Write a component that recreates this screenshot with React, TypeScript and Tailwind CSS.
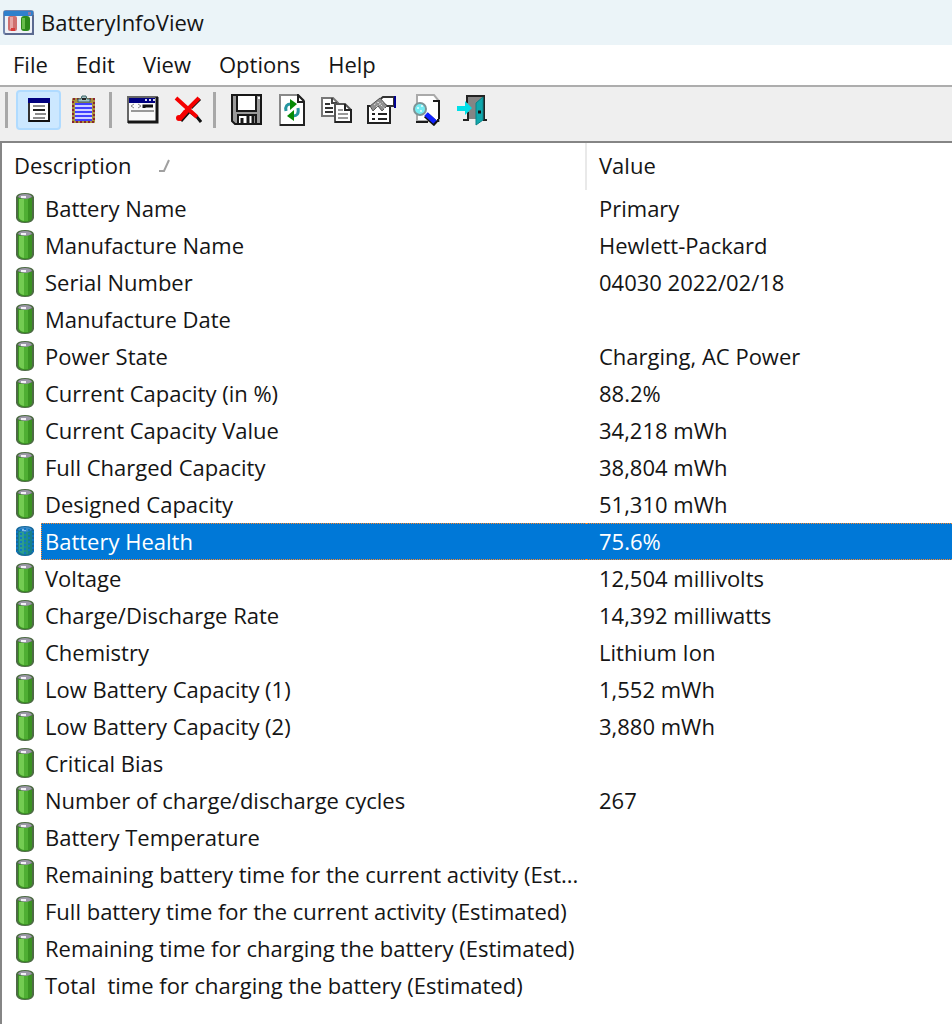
import React, { useState } from 'react';

const icon = 'block shrink-0';

const AppIcon = () => (
  <svg className={icon} width="32" height="26" viewBox="0 0 32 26">
    <rect x="1" y="1" width="29" height="23" rx="2" fill="#eef1f7" stroke="#7386ad" strokeWidth="2" />
    <path d="M1 1h29v5H1z" fill="#2f80cc" />
    <path d="M25 2h3v3h-3z" fill="#8a78a4" />
    <path d="M2 24h28V5" fill="none" stroke="#5c6a90" strokeWidth="2" />
    <rect x="5" y="6" width="9" height="15" rx="2" fill="#cf7070" />
    <rect x="7" y="7" width="3" height="12" fill="#e6a5a5" />
    <path d="M8 18h4v3H8z" fill="#d83a3a" />
    <rect x="18" y="6" width="9" height="15" rx="3" fill="#2c8a1b" />
    <rect x="19" y="8" width="3" height="11" fill="#68bd4c" />
  </svg>
);

const DetailsIcon = () => (
  <svg className={icon} width="24" height="26" viewBox="0 0 24 26">
    <rect x="2" y="2" width="20" height="22" fill="#fff" stroke="#333" strokeWidth="2" />
    <path d="M1 1h22v5H1z" fill="#000080" />
    <path d="M2 24h20V6" fill="none" stroke="#111" strokeWidth="2" />
    <path d="M6 9h12M8 17h11M6 21h12" stroke="#8c8c8c" strokeWidth="2" />
    <path d="M6 13h12" stroke="#222" strokeWidth="2" />
  </svg>
);

const ClipboardIcon = () => (
  <svg className={icon} width="26" height="30" viewBox="0 0 26 30">
    <rect x="1" y="3" width="23" height="25" rx="1" fill="#a8923c" />
    <rect x="2" y="4" width="21" height="23" fill="none" stroke="#8a2530" strokeWidth="2" strokeDasharray="2 2" />
    <rect x="4" y="8" width="17" height="17" fill="#d0d4ff" />
    <path d="M4 9h17M4 13h17M4 17h17M4 21h17M4 25h17" stroke="#4040ff" strokeWidth="2" />
    <path d="M7 7V4h3l1-3h4l1 3h3v3z" fill="#a4c4c4" stroke="#3d6568" />
    <path d="M11 4h4" stroke="#222" strokeWidth="2" />
  </svg>
);

const WindowIcon = () => (
  <svg className={icon} width="32" height="28" viewBox="0 0 32 28">
    <rect x="1" y="1" width="29" height="25" fill="#fafafa" stroke="#666" strokeWidth="2" />
    <path d="M1 26h29V1" fill="none" stroke="#161616" strokeWidth="3" />
    <path d="M2 2h26v5H2z" fill="#000080" />
    <path d="M18 4h2M22 4h2M26 4h2" stroke="#d8d8f0" strokeWidth="2" />
    <path d="M7 8l-3 2 3 2M11 8l3 2-3 2" fill="none" stroke="#888" strokeWidth="1" />
    <path d="M17 12v-2h9" fill="none" stroke="#111" strokeWidth="3" />
    <path d="M4 15h23" stroke="#999" strokeWidth="2" />
  </svg>
);

const DeleteIcon = () => (
  <svg className={icon} width="28" height="28" viewBox="0 0 28 28">
    <path d="M7 25l8-9M17 12L26 3M15 15l8 6 4 5" fill="none" stroke="#111" strokeWidth="3" />
    <path d="M2 2l11 10 10 9" fill="none" stroke="#f50000" strokeWidth="4" />
    <path d="M25 2L14 13 5 23" fill="none" stroke="#f50000" strokeWidth="4" />
    <path d="M10 14l5 2-8 9-4-2z" fill="#f50000" />
    <circle cx="5" cy="22" r="3" fill="#f50000" />
  </svg>
);

const SaveIcon = () => (
  <svg className={icon} width="32" height="32" viewBox="0 0 32 32">
    <path d="M1 1h29v29H4l-3-3z" fill="#9a9a9a" stroke="#181818" strokeWidth="2" />
    <path d="M6 1h19v16H6z" fill="#fff" stroke="#181818" strokeWidth="2" />
    <path d="M7 21h18v9H7z" fill="#fff" stroke="#181818" strokeWidth="2" />
    <path d="M11 24v6M17 22v8M22 22v8" stroke="#181818" strokeWidth="3" />
    <path d="M27 4h2" stroke="#fff" strokeWidth="2" />
  </svg>
);

const RefreshIcon = () => (
  <svg className={icon} width="26" height="32" viewBox="0 0 26 32">
    <path d="M1 1h18l6 6v24H1z" fill="#fff" stroke="#888" strokeWidth="2" />
    <path d="M1 31h24V8h-6V1l6 6" fill="none" stroke="#222" strokeWidth="2" />
    <path d="M7 17c-1-5 1-7 5-7M19 14c1 6-1 8-5 8" fill="none" stroke="#2495a0" strokeWidth="3" />
    <path d="M11 5l7 5-7 6z" fill="#058a05" />
    <path d="M15 16v11l-7-5z" fill="#058a05" />
  </svg>
);

const CopyIcon = () => (
  <svg className={icon} width="32" height="26" viewBox="0 0 32 26">
    <path d="M1 1h11l5 5v13H1z" fill="#fff" stroke="#777" strokeWidth="2" />
    <path d="M11 1v5h5" fill="none" stroke="#444" strokeWidth="2" />
    <path d="M4 7h5M4 11h8M4 15h8" stroke="#333" strokeWidth="2" />
    <path d="M14 7h10l6 6v12H14z" fill="#fff" stroke="#555" strokeWidth="2" />
    <path d="M14 25h16V13h-6V7" fill="none" stroke="#222" strokeWidth="2" />
    <path d="M17 13h5M17 17h10M17 21h10" stroke="#999" strokeWidth="2" />
  </svg>
);

const PropertiesIcon = () => (
  <svg className={icon} width="32" height="30" viewBox="0 0 32 30">
    <path d="M2 11h22v17H2z" fill="#fff" stroke="#222" strokeWidth="2" />
    <path d="M6 19h3M6 24h3M12 19h9M12 24h9" stroke="#222" strokeWidth="2" />
    <path d="M12 6l5-4h11v9h-7l-5-3z" fill="#fff" stroke="#333" strokeWidth="2" />
    <path d="M4 11l5-4 5-4 7 8-5 5-4-5-5 5z" fill="#909090" stroke="#555" />
    <path d="M8 10l4-3M12 7l7 7M10 12l7-5" stroke="#ddd" strokeDasharray="2 2" />
    <path d="M29 1v12" stroke="#000090" strokeWidth="2" />
  </svg>
);

const FindIcon = () => (
  <svg className={icon} width="30" height="32" viewBox="0 0 30 32">
    <path d="M5 1h17l5 6v20H5z" fill="#fff" stroke="#aaa" strokeWidth="2" />
    <path d="M21 7h6v18" fill="none" stroke="#1a1a1a" strokeWidth="2" />
    <path d="M4 28h12M26 25v3" stroke="#1a1a1a" strokeWidth="2" />
    <circle cx="8" cy="15" r="6" fill="#74ecf2" stroke="#7d9496" strokeWidth="2" />
    <path d="M5 14h2M9 12h2M8 17h2" stroke="#c8fbff" strokeWidth="2" />
    <path d="M14 21l10 9" stroke="#111" strokeWidth="6" />
    <path d="M14 20l9 8" stroke="#1022ff" strokeWidth="5" />
  </svg>
);

const ExitIcon = () => (
  <svg className={icon} width="32" height="32" viewBox="0 0 32 32">
    <path d="M11 2h16v23H11z" fill="#858585" />
    <path d="M7 26h5V18M11 9V2h17v24h3" fill="none" stroke="#222" strokeWidth="2" />
    <path d="M20 9l7-6v23l-7 5z" fill="#11a8ad" stroke="#0c8388" />
    <path d="M22 18h3" stroke="#111" strokeWidth="3" />
    <path d="M1 12h8V7l7 7-7 7v-4H1z" fill="#00dfe8" />
  </svg>
);

const BatteryIcon = ({ selected }: { selected: boolean }) => (
  <svg className={icon} width="20" height="32" viewBox="0 0 20 32">
    <path d="M1 5q1-4 9-4t9 4v21q-1 5-9 5t-9-5z" fill={selected ? '#14689c' : '#4d6b44'} />
    <path d="M3 6h14v20q-1 4-7 4t-7-4z" fill={selected ? '#17808a' : '#3a9322'} />
    <path d="M4 7h5v22q-5-1-5-4z" fill={selected ? '#2c9c90' : '#74cc52'} />
    <path d="M9 7h4v22H9z" fill={selected ? '#1f8f88' : '#4fae33'} />
    <path d="M3 5q1-3 7-3t7 3q-7 4-14 0z" fill={selected ? '#3a8ac8' : '#9c98a8'} />
    <path d="M6 4h5v2H6z" fill={selected ? '#7db8e2' : '#f2f0f6'} />
    {selected && (
      <path d="M2 6v21M6 4v24M10 3v26M14 4v24M18 6v21" stroke="#0f78c4" strokeWidth="2" strokeDasharray="2 2" />
    )}
  </svg>
);

const menus = ['File', 'Edit', 'View', 'Options', 'Help'];

const toolGroups = [
  [
    { label: 'Battery Information', Icon: DetailsIcon },
    { label: 'Battery Log', Icon: ClipboardIcon },
  ],
  [
    { label: 'Choose Columns', Icon: WindowIcon },
    { label: 'Clear Log', Icon: DeleteIcon },
  ],
  [
    { label: 'Save', Icon: SaveIcon },
    { label: 'Refresh', Icon: RefreshIcon },
    { label: 'Copy', Icon: CopyIcon },
    { label: 'Properties', Icon: PropertiesIcon },
    { label: 'Find', Icon: FindIcon },
    { label: 'Exit', Icon: ExitIcon },
  ],
];

const rows = [
  { name: 'Battery Name', value: 'Primary' },
  { name: 'Manufacture Name', value: 'Hewlett-Packard' },
  { name: 'Serial Number', value: '04030 2022/02/18' },
  { name: 'Manufacture Date', value: '' },
  { name: 'Power State', value: 'Charging, AC Power' },
  { name: 'Current Capacity (in %)', value: '88.2%' },
  { name: 'Current Capacity Value', value: '34,218 mWh' },
  { name: 'Full Charged Capacity', value: '38,804 mWh' },
  { name: 'Designed Capacity', value: '51,310 mWh' },
  { name: 'Battery Health', value: '75.6%' },
  { name: 'Voltage', value: '12,504 millivolts' },
  { name: 'Charge/Discharge Rate', value: '14,392 milliwatts' },
  { name: 'Chemistry', value: 'Lithium Ion' },
  { name: 'Low Battery Capacity (1)', value: '1,552 mWh' },
  { name: 'Low Battery Capacity (2)', value: '3,880 mWh' },
  { name: 'Critical Bias', value: '' },
  { name: 'Number of charge/discharge cycles', value: '267' },
  { name: 'Battery Temperature', value: '' },
  { name: 'Remaining battery time for the current activity (Est...', value: '' },
  { name: 'Full battery time for the current activity (Estimated)', value: '' },
  { name: 'Remaining time for charging the battery (Estimated)', value: '' },
  { name: 'Total  time for charging the battery (Estimated)', value: '' },
];

const App: React.FC = () => {
  const [selected, setSelected] = useState('Battery Health');
  const [activeTool, setActiveTool] = useState('Battery Information');

  return (
    <div className="flex min-h-screen flex-col bg-white font-['Open_Sans','Noto_Sans',sans-serif] text-[22px] text-[#151515]">
      <header className="flex h-[45px] items-center gap-1.5 bg-[#ebf4f8] pl-[3px]">
        <AppIcon />
        <h1>BatteryInfoView</h1>
      </header>

      <nav className="flex h-10 items-center gap-7 pb-0.5 pl-[13px]">
        {menus.map((menu) => (
          <button key={menu}>{menu}</button>
        ))}
      </nav>

      <div className="flex h-14 items-center border-t-2 border-[#adadad] bg-[#efefef] pb-2 pl-0.5">
        {toolGroups.map((group, i) => (
          <div key={i} className="flex items-center">
            <div className="mr-2 ml-[3px] h-9 w-[3px] bg-[#a8a8a8]" />
            {group.map(({ label, Icon }) => (
              <button
                key={label}
                aria-label={label}
                onClick={i === 0 ? () => setActiveTool(label) : undefined}
                className={`flex h-10 w-[45px] items-center justify-center rounded border-2 ${
                  label === activeTool ? 'border-[#b0dbff] bg-[#cce8ff]' : 'border-transparent'
                }`}
              >
                <Icon />
              </button>
            ))}
          </div>
        ))}
      </div>

      <main className="flex-1 border-t-2 border-l-2 border-[#858585]">
        <table className="w-full table-fixed border-collapse text-left">
          <thead>
            <tr className="h-[47px]">
              <th className="w-[584px] border-r-2 border-[#e9e9e9] p-0 pb-0.5 pl-3 font-normal">
                <button className="flex items-center gap-7">
                  Description
                  <svg width="12" height="14" viewBox="0 0 12 14">
                    <path d="M0 12h5l5-11" fill="none" stroke="#a0a0a0" strokeWidth="2" />
                  </svg>
                </button>
              </th>
              <th className="p-0 pb-0.5 pl-3 font-normal">Value</th>
            </tr>
          </thead>
          <tbody>
            {rows.map(({ name, value }) => {
              const active = name === selected;
              return (
                <tr key={name} onClick={() => setSelected(name)} className="h-[37px] cursor-default">
                  <td className="p-0 pl-[13px]">
                    <div className="flex items-center gap-1.5">
                      <div className="pb-0.5">
                        <BatteryIcon selected={active} />
                      </div>
                      <span
                        className={`flex h-[37px] flex-1 items-center border border-r-0 pl-[3px] whitespace-pre ${
                          active ? 'border-dotted border-[#ff8728] bg-[#0078d7] text-white' : 'border-transparent'
                        }`}
                      >
                        {name}
                      </span>
                    </div>
                  </td>
                  <td className="p-0">
                    <span
                      className={`flex h-[37px] items-center border-y pl-[13px] ${
                        active ? 'border-dotted border-[#ff8728] bg-[#0078d7] text-white' : 'border-transparent'
                      }`}
                    >
                      {value}
                    </span>
                  </td>
                </tr>
              );
            })}
          </tbody>
        </table>
      </main>
    </div>
  );
};

export default App;
